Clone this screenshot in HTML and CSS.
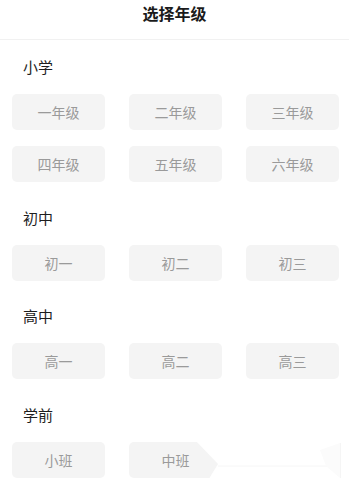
FILE: index.html
```html
<!DOCTYPE html>
<html lang="zh">
<head>
<meta charset="utf-8">
<link rel="stylesheet" href="styles.css">
</head>
<body>
<div class="header">选择年级</div>
<div class="section first">
  <div class="label">小学</div>
  <div class="grid">
    <div class="btn">一年级</div>
    <div class="btn">二年级</div>
    <div class="btn">三年级</div>
    <div class="btn">四年级</div>
    <div class="btn">五年级</div>
    <div class="btn">六年级</div>
  </div>
</div>
<div class="section">
  <div class="label">初中</div>
  <div class="grid">
    <div class="btn">初一</div>
    <div class="btn">初二</div>
    <div class="btn">初三</div>
  </div>
</div>
<div class="section">
  <div class="label">高中</div>
  <div class="grid">
    <div class="btn">高一</div>
    <div class="btn">高二</div>
    <div class="btn">高三</div>
  </div>
</div>
<div class="section">
  <div class="label">学前</div>
  <div class="grid last">
    <div class="btn">小班</div>
    <div class="btn">中班</div>
    <svg class="overlay" width="155" height="42" viewBox="0 0 155 42">
      <polygon points="5,0 155,0 155,42 17,42 28,24" fill="#ffffff"/>
      <line x1="28" y1="26" x2="145" y2="26" stroke="#f6f6f6" stroke-width="1"/>
      <line x1="20" y1="38.5" x2="145" y2="38.5" stroke="#f7f7f7" stroke-width="1"/>
      <polygon points="130,10 150,3 150,38 136,26" fill="#fbfbfb"/>
      <line x1="150.5" y1="3" x2="150.5" y2="38" stroke="#f5f5f5" stroke-width="1"/>
    </svg>
  </div>
</div>
</body>
</html>
```

FILE: styles.css
```css
html, body {
  margin: 0;
  padding: 0;
  background: #ffffff;
}
body {
  width: 349px;
  font-family: "Noto Sans CJK SC", "Noto Sans", sans-serif;
}
.header {
  height: 37px;
  padding-top: 2px;
  line-height: 22px;
  text-align: center;
  font-size: 16px;
  font-weight: bold;
  color: #1a1a1a;
  border-bottom: 1px solid #f1f1f1;
}
.section {
  margin-top: 25.5px;
  padding-left: 12px;
}
.section.first {
  margin-top: 17px;
}
.label {
  padding-left: 11px;
  font-size: 15px;
  line-height: 20px;
  color: #1e1e1e;
}
.grid {
  margin-top: 17px;
  display: grid;
  grid-template-columns: repeat(3, 93px);
  column-gap: 24px;
  row-gap: 16px;
}
.grid.last {
  position: relative;
}
.btn {
  height: 36px;
  line-height: 36px;
  text-align: center;
  font-size: 14px;
  color: #9a9a9a;
  background: #f4f4f4;
  border-radius: 5px;
}
.overlay {
  position: absolute;
  left: 178px;
  top: -2px;
}
```
